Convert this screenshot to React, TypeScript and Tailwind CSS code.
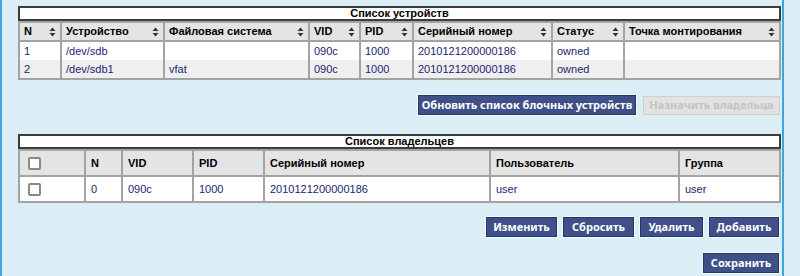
import React from "react";

const SortIcon = () => (
  <svg width="7" height="10" viewBox="0 0 7 10" className="shrink-0">
    <path d="M3.5 0.5 L6.5 4 L0.5 4 Z" fill="#333" />
    <path d="M3.5 9.5 L6.5 6 L0.5 6 Z" fill="#333" />
  </svg>
);

const Checkbox = () => (
  <div className="w-[13px] h-[13px] rounded-[2px] border-2 border-[#8a8a8a] bg-white" />
);

const Btn = ({ children, w, disabled }: { children: React.ReactNode; w: string; disabled?: boolean }) => (
  <div
    className={
      disabled
        ? `${w} h-[19px] flex items-center justify-center whitespace-nowrap bg-[#e2e2e2] border border-[#cfcfcf] text-[#c4c4c4] font-bold text-[11px]`
        : `${w} h-[20px] flex items-center justify-center whitespace-nowrap bg-[#3e5087] border border-[#27366a] outline outline-1 outline-[#f4f8fb] text-white font-bold text-[11px]`
    }
    style={{ fontFamily: '"Noto Sans", sans-serif' }}
  >
    {children}
  </div>
);

const Title = ({ children }: { children: React.ReactNode }) => (
  <div className="h-[15px] bg-white border-2 border-[#3c3c3c] flex items-center justify-center font-bold text-[11px] text-black leading-none">
    {children}
  </div>
);

const devCols = [
  { t: "N", w: "w-[42px]" },
  { t: "Устройство", w: "w-[103px]" },
  { t: "Файловая система", w: "w-[145px]" },
  { t: "VID", w: "w-[51px]" },
  { t: "PID", w: "w-[53px]" },
  { t: "Серийный номер", w: "w-[139px]" },
  { t: "Статус", w: "w-[72px]" },
  { t: "Точка монтирования", w: "" },
];

const devRows = [
  ["1", "/dev/sdb", "", "090c", "1000", "2010121200000186", "owned", ""],
  ["2", "/dev/sdb1", "vfat", "090c", "1000", "2010121200000186", "owned", ""],
];

const ownCols = [
  { t: "", w: "w-[66px]" },
  { t: "N", w: "w-[37px]" },
  { t: "VID", w: "w-[71px]" },
  { t: "PID", w: "w-[71px]" },
  { t: "Серийный номер", w: "w-[226px]" },
  { t: "Пользователь", w: "w-[189px]" },
  { t: "Группа", w: "" },
];

const ownRow = ["", "0", "090c", "1000", "2010121200000186", "user", "user"];

export default function App() {
  return (
    <div
      className="w-[800px] h-[276px] bg-[#dbedf5] overflow-hidden"
      style={{ fontFamily: '"Liberation Sans", Arial, sans-serif' }}
    >
      <div className="w-[784px] h-[276px] border-l-2 border-r-2 border-[#3aa6d9] pl-[16px] pr-[1px] pt-[6px]">
        <Title>Список устройств</Title>
        <table className="w-full border-collapse border-2 border-[#a3a3a3] text-[11px] table-fixed">
          <thead>
            <tr className="h-[19px] bg-[#e4e4e4]">
              {devCols.map((c, i) => (
                <th key={i} className={`${c.w} border-2 border-[#a3a3a3] px-[4px] py-0 text-left font-bold text-black`}>
                  <div className="flex items-center justify-between">
                    <span>{c.t}</span>
                    <SortIcon />
                  </div>
                </th>
              ))}
            </tr>
          </thead>
          <tbody>
            {devRows.map((r, ri) => (
              <tr key={ri} className={`h-[19px] ${ri % 2 ? "bg-[#efefef]" : "bg-white"}`}>
                {r.map((v, i) => (
                  <td key={i} className="border-x-2 border-[#a3a3a3] px-[4px] py-0 text-[#1c2470]">
                    {v}
                  </td>
                ))}
              </tr>
            ))}
          </tbody>
        </table>

        <div className="flex justify-end gap-[7px] mt-[15px] pr-[1px]">
          <Btn w="w-[218px]">Обновить список блочных устройств</Btn>
          <div className="mt-[1px]">
            <Btn w="w-[137px]" disabled>
              Назначить владельца
            </Btn>
          </div>
        </div>

        <div className="mt-[19px]">
          <Title>Список владельцев</Title>
        </div>
        <table className="w-full border-collapse border-2 border-[#a3a3a3] text-[11px] table-fixed">
          <thead>
            <tr className="h-[26px] bg-[#e4e4e4]">
              {ownCols.map((c, i) => (
                <th key={i} className={`${c.w} border-2 border-[#a3a3a3] px-[5px] py-0 text-left font-bold text-black`}>
                  {i === 0 ? (
                    <div className="pl-[3px]">
                      <Checkbox />
                    </div>
                  ) : (
                    c.t
                  )}
                </th>
              ))}
            </tr>
          </thead>
          <tbody>
            <tr className="h-[26px] bg-white">
              {ownRow.map((v, i) => (
                <td key={i} className="border-x-2 border-[#a3a3a3] px-[5px] py-0 text-[#1c2470]">
                  {i === 0 ? (
                    <div className="pl-[3px]">
                      <Checkbox />
                    </div>
                  ) : (
                    v
                  )}
                </td>
              ))}
            </tr>
          </tbody>
        </table>

        <div className="flex justify-end gap-[6px] mt-[14px] pr-[2px]">
          <Btn w="w-[71px]">Изменить</Btn>
          <Btn w="w-[71px]">Сбросить</Btn>
          <Btn w="w-[63px]">Удалить</Btn>
          <Btn w="w-[70px]">Добавить</Btn>
        </div>
        <div className="flex justify-end mt-[16px] pr-[2px]">
          <Btn w="w-[76px]">Сохранить</Btn>
        </div>
      </div>
    </div>
  );
}
